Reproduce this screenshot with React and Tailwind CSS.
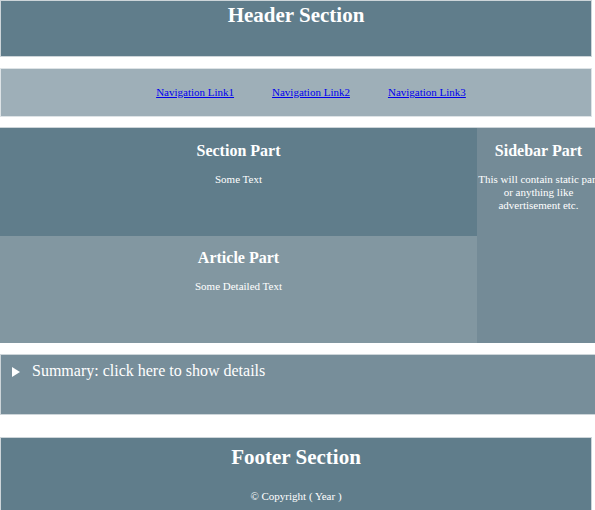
export default function App() {
  const serif = { fontFamily: '"Liberation Serif", "Times New Roman", serif' };
  return (
    <div className="w-[595px] h-[510px] overflow-hidden bg-white text-white" style={serif}>
      <header className="w-[592px] h-[57px] bg-[#607d8b] border border-[#cdd5d9] pt-[2px]">
        <h1 className="text-center text-[21px] leading-[24px] font-bold">Header Section</h1>
      </header>
      <nav className="mt-[11px] w-[592px] h-[49px] bg-[#9eafb8] border border-[#dde3e6] flex items-center justify-center gap-[38px] pl-[30px] text-[11px] leading-[13px]">
        <a href="#" className="text-[#0000ee] underline">Navigation Link1</a>
        <a href="#" className="text-[#0000ee] underline">Navigation Link2</a>
        <a href="#" className="text-[#0000ee] underline">Navigation Link3</a>
      </nav>
      <main className="mt-[10px] w-[600px] h-[216px] flex border-t border-[#cdd5d9]">
        <div className="w-[477px] flex flex-col">
          <section className="h-[108px] bg-[#607d8b] pt-[14px] text-center">
            <h2 className="text-[16px] leading-[18px] font-bold">Section Part</h2>
            <p className="mt-[13px] text-[11px] leading-[13px]">Some Text</p>
          </section>
          <article className="h-[107px] bg-[#8297a1] pt-[13px] text-center">
            <h2 className="text-[16px] leading-[18px] font-bold">Article Part</h2>
            <p className="mt-[13px] text-[11px] leading-[13px]">Some Detailed Text</p>
          </article>
        </div>
        <aside className="w-[122px] bg-[#748b97] pl-[1px] pt-[14px] text-center">
          <h2 className="text-[16px] leading-[18px] font-bold">Sidebar Part</h2>
          <p className="mt-[13px] text-[11px] leading-[13px]">This will contain static part or anything like advertisement etc.</p>
        </aside>
      </main>
      <div className="mt-[11px] w-[600px] h-[61px] bg-[#778e9a] border border-[#cdd5d9] pt-[7px] pl-[10px] flex items-start">
        <svg width="10" height="12" viewBox="0 0 10 12" className="mt-[4px] mr-[11px] shrink-0">
          <polygon points="1,1 9,6 1,11" fill="white" />
        </svg>
        <span className="text-[16px] leading-[18px]">Summary: click here to show details</span>
      </div>
      <footer className="mt-[22px] w-[592px] h-[75px] bg-[#607d8b] border border-[#cdd5d9] pt-[7px] text-center">
        <h1 className="text-[21px] leading-[24px] font-bold">Footer Section</h1>
        <p className="mt-[21px] text-[11px] leading-[13px]">© Copyright ( Year )</p>
      </footer>
    </div>
  );
}
